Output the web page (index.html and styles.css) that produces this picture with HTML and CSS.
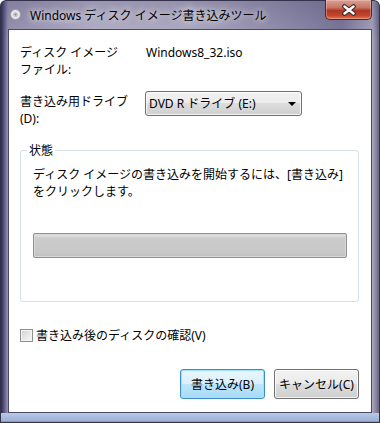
FILE: index.html
```html
<!DOCTYPE html>
<html lang="ja">
  <head>
    <meta charset="utf-8">
    <link rel="stylesheet" href="styles.css">
  </head>
  <body>
    <div class="window">
      <div class="titlebar">
        <svg class="app-icon" width="11" height="11" viewBox="0 0 11 11">
          <circle cx="5.5" cy="5.5" r="5" fill="#e8e8ea" stroke="#9a9aa4" stroke-width="1"/>
          <circle cx="5.5" cy="5.5" r="2.6" fill="#c9c9cf"/>
          <circle cx="5.5" cy="5.5" r="1.1" fill="#8a8a94"/>
        </svg>
        <span class="title">Windows ディスク イメージ書き込みツール</span>
        <div class="close-btn">
          <svg width="16" height="12" viewBox="0 0 16 12">
            <path d="M3.5 2.5 L12.5 9.5 M12.5 2.5 L3.5 9.5" stroke="#3b2a2e" stroke-width="4.6" stroke-linecap="round"/>
            <path d="M3.5 2.5 L12.5 9.5 M12.5 2.5 L3.5 9.5" stroke="#ffffff" stroke-width="2.4" stroke-linecap="round"/>
          </svg>
        </div>
      </div>

      <div class="client">
        <div class="field-row row-file">
          <span class="field-label">ディスク イメージ<br>ファイル:</span>
          <span class="field-value">Windows8_32.iso</span>
        </div>

        <div class="field-row row-drive">
          <span class="field-label">書き込み用ドライブ<br>(D):</span>
          <div class="select">
            <span>DVD R ドライブ (E:)</span>
            <span class="select-arrow"></span>
          </div>
        </div>

        <fieldset class="status-group">
          <legend>状態</legend>
          <p class="status-text">ディスク イメージの書き込みを開始するには、[書き込み]<br>をクリックします。</p>
          <div class="progress"></div>
        </fieldset>

        <label class="verify">
          <span class="checkbox"></span>
          <span>書き込み後のディスクの確認(V)</span>
        </label>

        <div class="buttons">
          <button class="btn btn-default">書き込み(B)</button>
          <button class="btn">キャンセル(C)</button>
        </div>
      </div>
    </div>
  </body>
</html>
```

FILE: styles.css
```css
* {
  box-sizing: border-box;
}

body {
  margin: 0;
  font-family: "Noto Sans", "Noto Sans CJK JP", sans-serif;
  font-size: 12px;
  color: #000;
}

.window {
  width: 380px;
  height: 423px;
  display: flex;
  flex-direction: column;
  padding: 0 8px 10px;
  border-radius: 6px 6px 0 0;
  box-shadow: inset 0 0 0 1px #34324a;
  background:
    linear-gradient(to bottom, #b9c9e6, #9cb1d6 80%, #4d5a78) bottom / 100% 10px no-repeat,
    linear-gradient(to bottom, rgba(60, 55, 95, 0.25), rgba(60, 55, 95, 0) 40px),
    linear-gradient(to right, #1f1d45 0px, #4a4776 3px, #9995b2 8px, #b9b5cb 25%, #b3afc6 50%, #9793b0 72%, #7d799c 90%, #a9a7c0 98%, #5f5c7c 100%);
}

/* title bar */
.titlebar {
  height: 29px;
  display: flex;
  align-items: center;
  padding-left: 2px;
}

.app-icon {
  margin-right: 9px;
  flex-shrink: 0;
}

.title {
  font-size: 12px;
  color: #000;
  text-shadow: 0 0 6px rgba(255, 255, 255, 0.9), 0 0 10px rgba(255, 255, 255, 0.6);
}

.close-btn {
  margin-left: auto;
  align-self: flex-start;
  width: 47px;
  height: 20px;
  display: flex;
  align-items: center;
  justify-content: center;
  border: 1px solid #4e2626;
  border-top: none;
  border-radius: 0 0 5px 5px;
  background: linear-gradient(to bottom, #d9a196 0%, #c87463 40%, #ac3a25 55%, #c2432a 80%, #dd7452 100%);
  box-shadow: inset 0 0 0 1px rgba(255, 220, 210, 0.35);
}

/* client area */
.client {
  flex: 1;
  display: flex;
  flex-direction: column;
  background: #fff;
  border: 1px solid #4a4866;
  padding: 14px 12px 13px 11px;
  line-height: 17px;
}

.field-row {
  display: flex;
  align-items: flex-start;
}

.field-label {
  width: 125px;
  flex-shrink: 0;
}

.field-value {
  padding-left: 1px;
}

.row-drive {
  margin-top: 13px;
}

.row-drive .field-label {
  margin-top: 2px;
}

.select {
  width: 157px;
  height: 25px;
  display: flex;
  align-items: center;
  padding-left: 3px;
  border: 1px solid #707070;
  border-radius: 3px;
  background: linear-gradient(to bottom, #f2f2f2 0%, #ebebeb 50%, #dddddd 50%, #cfcfcf 100%);
  box-shadow: inset 0 0 0 1px rgba(255, 255, 255, 0.75);
}

.select-arrow {
  margin-left: auto;
  margin-right: 5px;
  width: 0;
  height: 0;
  border-left: 4px solid transparent;
  border-right: 4px solid transparent;
  border-top: 4px solid #000;
}

/* status group */
.status-group {
  margin: 15px 0 0;
  padding: 7px 11px 43px 12px;
  border: 1px solid #d5dfe5;
  border-radius: 3px;
  min-width: 0;
}

.status-group legend {
  padding: 0 2px;
  margin-left: -6px;
  line-height: 17px;
}

.status-text {
  margin: 0;
  white-space: nowrap;
}

.progress {
  margin-top: 33px;
  height: 25px;
  border: 1px solid #8e8e8e;
  border-radius: 2px;
  background: linear-gradient(to bottom, #e6e6e6 0%, #cbcbcb 20%, #c8c8c8 80%, #bdbdbd 100%);
  box-shadow: inset 0 0 0 1px #d8d8d8;
}

/* verify checkbox */
.verify {
  margin-top: 25px;
  display: flex;
  align-items: center;
  gap: 3px;
}

.checkbox {
  width: 13px;
  height: 13px;
  border: 1px solid #8e8f8f;
  background: linear-gradient(135deg, #cfcfcf 0%, #e6e6e6 50%, #fbfbfb 100%);
  box-shadow: inset 0 0 0 1px #f4f4f4;
}

/* buttons */
.buttons {
  margin-top: auto;
  display: flex;
  justify-content: flex-end;
  gap: 9px;
}

.btn {
  width: 85px;
  height: 30px;
  padding: 0;
  font-family: inherit;
  font-size: 12px;
  color: #000;
  border: 1px solid #707070;
  border-radius: 3px;
  background: linear-gradient(to bottom, #f2f2f2 0%, #ebebeb 50%, #dddddd 50%, #cfcfcf 100%);
  box-shadow: inset 0 0 0 1px rgba(255, 255, 255, 0.75);
}

.btn-default {
  border-color: #3c8fc4;
  background: linear-gradient(to bottom, #eaf6fd 0%, #d9f0fc 50%, #bee6fd 50%, #a7d9f5 100%);
  box-shadow: inset 0 0 0 1px #9fe0ff, inset 0 0 3px #c6eeff;
}
```
